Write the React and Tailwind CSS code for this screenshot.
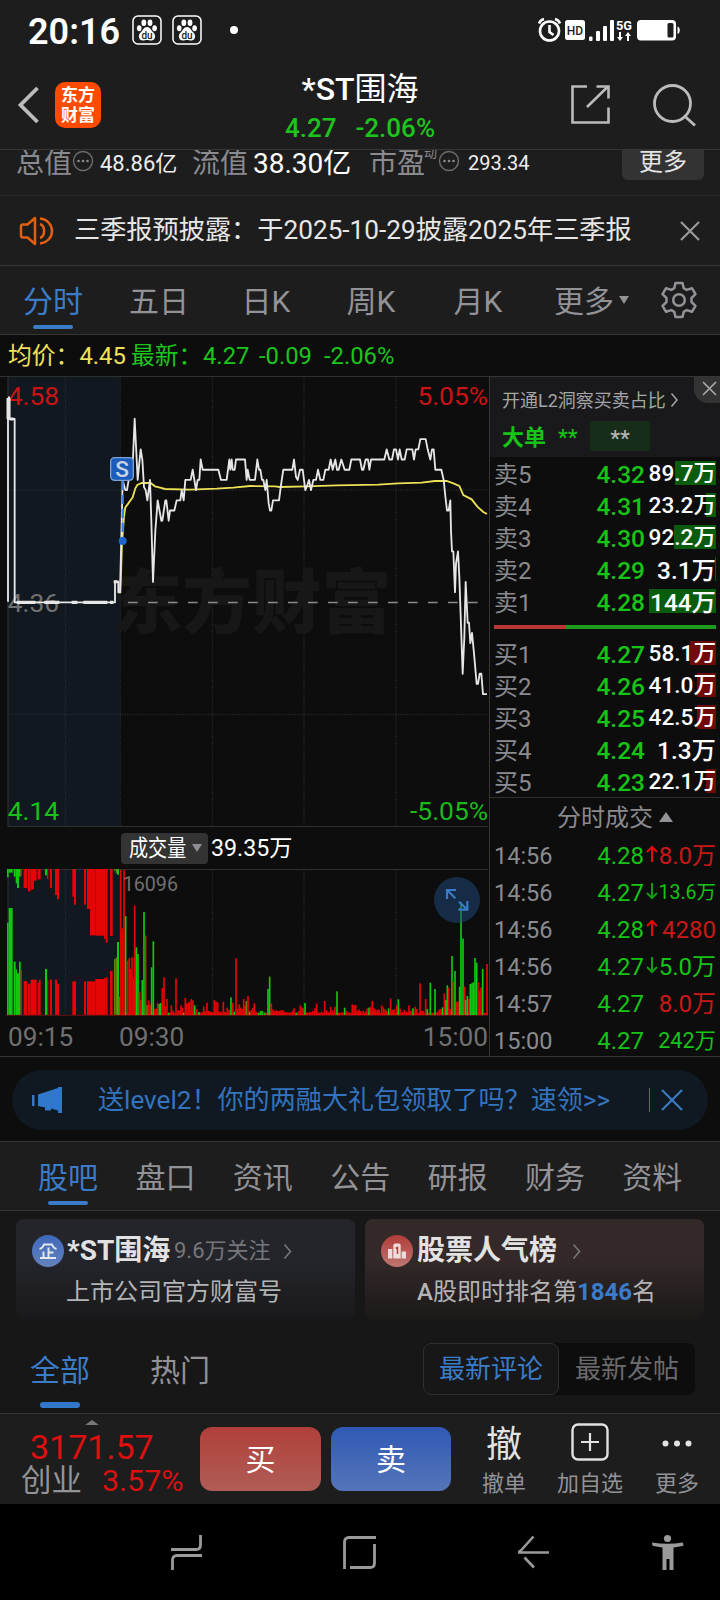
import React from 'react';
import clsx from 'clsx';

const PERIODS = [
    { label: '分时', className: 'ml-[23px] w-[60px] text-[#3b7cc9]', active: true },
    { label: '五日', className: 'ml-[46px] w-[60px]' },
    { label: '日K', className: 'ml-[52px] w-[50px]' },
    { label: '周K', className: 'ml-[55px] w-[50px]' },
    { label: '月K', className: 'ml-[57px] w-[50px]' },
    { label: '更多', className: 'ml-[51px] w-[60px]' },
];

const SELLS = [
    { label: '卖5', price: '4.32', amount: '89.7万', depth: 41 },
    { label: '卖4', price: '4.31', amount: '23.2万', depth: 10 },
    { label: '卖3', price: '4.30', amount: '92.2万', depth: 42 },
    { label: '卖2', price: '4.29', amount: '3.1万', depth: 1 },
    { label: '卖1', price: '4.28', amount: '144万', depth: 67 },
];

const BUYS = [
    { label: '买1', price: '4.27', amount: '58.1万', depth: 26 },
    { label: '买2', price: '4.26', amount: '41.0万', depth: 19 },
    { label: '买3', price: '4.25', amount: '42.5万', depth: 19 },
    { label: '买4', price: '4.24', amount: '1.3万', depth: 0 },
    { label: '买5', price: '4.23', amount: '22.1万', depth: 10 },
];

const TRADES = [
    { time: '14:56', price: '4.28', amount: '8.0万', dir: 'up', red: true, size: 'text-[24px]' },
    { time: '14:56', price: '4.27', amount: '13.6万', dir: 'down', size: 'text-[19.5px]' },
    { time: '14:56', price: '4.28', amount: '4280', dir: 'up', red: true, size: 'text-[24px]' },
    { time: '14:56', price: '4.27', amount: '5.0万', dir: 'down', size: 'text-[24px]' },
    { time: '14:57', price: '4.27', amount: '8.0万', red: true, size: 'text-[24px]' },
    { time: '15:00', price: '4.27', amount: '242万', size: 'text-[21.5px]' },
];

const SECTIONS = ['股吧', '盘口', '资讯', '公告', '研报', '财务', '资料'];

// [x, ticks above yesterday's close], chart units are a third of a pixel
const PRICE = [
    [360, 1], [363, 5], [368, 12], [376, 11], [381, 11], [386, 12], [392, 13], [399, 14.2], [404, 18], [413, 12], [422, 15], [427, 14],
    [432, 11.3], [437, 11], [442, 10], [450, 12], [454, 8], [459, 2], [466, 7], [473, 10], [484, 8], [487, 8], [496, 10], [499, 10],
    [506, 8], [510, 9], [523, 9], [530, 10], [541, 10], [545, 11], [551, 10], [556, 12], [572, 12], [578, 13], [588, 11], [593, 12],
    [598, 12], [602, 14], [608, 13], [655, 13], [663, 12], [680, 12], [688, 14], [691, 13], [695, 14], [698, 13], [704, 13], [708, 14],
    [735, 14], [740, 12], [743, 13], [749, 12], [765, 12], [772, 14], [777, 13], [781, 13], [786, 12], [790, 12], [796, 11], [800, 12],
    [806, 9.7], [810, 9], [814, 9], [819, 10], [837, 10], [843, 11.5], [850, 13], [877, 13], [882, 14], [888, 12.3], [893, 12], [900, 13],
    [908, 13], [912, 12], [916, 11], [922, 11.5], [927, 12], [933, 11], [940, 12], [948, 12], [954, 13], [961, 12], [970, 12], [976, 13],
    [986, 13], [992, 14], [998, 13], [1006, 14], [1011, 13], [1016, 13], [1024, 14], [1034, 13], [1048, 13], [1054, 14], [1080, 14],
    [1086, 13], [1090, 13], [1097, 14], [1104, 14], [1108, 13], [1113, 14], [1153, 14], [1160, 15], [1168, 14], [1176, 14], [1182, 15],
    [1188, 15], [1194, 14], [1199, 15], [1205, 14], [1214, 14], [1220, 15], [1237, 15], [1242, 14], [1247, 15], [1255, 15], [1261, 16],
    [1277, 16], [1283, 15], [1291, 14], [1296, 15], [1301, 15], [1306, 13], [1324, 13], [1331, 12], [1336, 10.4], [1341, 9], [1346, 9],
    [1351, 10], [1353, 7], [1356, 5], [1360, 5], [1365, 1], [1368, 3.8], [1374, 5], [1378, 2.5], [1388, -7], [1393, -3.4], [1397, 2],
    [1403, -2], [1407, -2], [1411, -4], [1416, -3], [1422, -5], [1430, -8], [1434, -8], [1439, -7], [1444, -7], [1449, -9], [1461, -9],
];

const pricePoints = PRICE.map(([x, n]) => `${x},${697 - n * 30.6}`).join(' ');

const AVERAGE = '361,670 366,520 372,440 376,412 385,400 398,382 406,355 412,345 425,339 452,339 465,349 480,353 495,357 570,359 650,356 700,353 750,348 825,349 840,351 920,349 1010,346 1135,344 1195,340 1265,338 1305,333 1340,333 1360,340 1378,348 1390,375 1415,388 1432,410 1450,426 1461,432';

// Call auction bars: [x, width, hanging bar end, standing bar top, color]
const AUCTION = [
    [21, 5, 172, 308, 'g'], [26, 12, 158, 264, 'g'], [41, 6, 170, 425, 'g'], [47, 4, 190, 448, 'g'], [51, 6, 204, 460, 'g'],
    [57, 5, 170, 425, 'g'], [62, 4, 168, 448, 'r'], [71, 10, 204, 483, 'r'], [84, 8, 214, 491, 'r'], [92, 10, 208, 479, 'r'],
    [102, 8, 182, 479, 'r'], [113, 4, 178, 487, 'r'], [117, 5, 178, 479, 'r'], [135, 6, 166, 447, 'g'], [141, 4, 177, 479, 'r'],
    [150, 6, 204, 479, 'r'], [165, 6, 225, 479, 'r'], [171, 6, 238, 491, 'r'], [217, 5, 230, 484, 'r'], [222, 6, 254, 484, 'r'],
    [252, 6, 254, 484, 'r'], [261, 9, 267, 484, 'r'], [270, 16, 346, 484, 'r'], [286, 26, 347, 477, 'r'], [312, 5, 356, 474, 'r'],
    [317, 6, 368, 472, 'r'], [330, 8, 348, 453, 'r'], [342, 5, 152, 417, 'o'], [347, 4, 160, 412, 'o'], [351, 6, 164, 366, 'g'],
];

// Continuous trading bars: [center x, top, color]
const VOLUME = [
    [358, 530, 'o'], [362, 150], [367, 325], [372, 150], [377, 288, 'g'], [383, 422], [388, 414], [392, 447], [396, 412], [400, 475],
    [404, 257], [409, 382, 'g'], [414, 402, 'g'], [419, 515], [422, 540], [427, 480, 'g'], [432, 276, 'g'], [437, 347, 'b'], [441, 555, 'o'],
    [446, 541], [450, 553], [455, 442, 'g'], [460, 364, 'g'], [465, 566], [469, 566], [473, 549], [478, 552, 'g'], [482, 549, 'g'],
    [487, 504], [492, 472], [497, 560], [501, 537], [506, 578, 'g'], [514, 556], [519, 572], [528, 475], [534, 570], [539, 572], [543, 556],
    [547, 563], [551, 578, 'g'], [556, 534], [560, 550], [565, 548], [569, 545], [574, 537], [579, 541], [584, 556, 'g'], [590, 567],
    [597, 576, 'g'], [605, 576], [611, 560], [616, 573], [621, 548], [626, 573], [631, 575], [636, 576], [643, 540], [648, 545], [653, 547],
    [658, 575], [663, 575], [670, 545], [675, 575], [682, 563], [687, 570], [693, 532, 'g'], [698, 548], [703, 575, 'g'], [708, 415],
    [713, 567], [718, 553], [722, 563], [727, 567], [731, 537], [735, 556], [739, 543, 'o'], [744, 528], [749, 575, 'g'], [754, 570],
    [759, 563], [763, 550], [768, 575], [776, 578, 'g'], [782, 573, 'g'], [787, 573, 'g'], [795, 578, 'g'], [804, 507, 'g'],
    [809, 470, 'g'], [814, 550], [819, 568], [824, 573], [829, 570], [834, 573], [839, 573], [844, 570], [849, 571], [854, 575],
    [860, 577], [870, 577], [877, 573], [882, 565], [889, 578, 'g'], [896, 573], [901, 556], [906, 562], [910, 565], [915, 549, 'g'],
    [920, 577], [930, 576], [938, 573], [945, 565], [950, 551], [956, 577], [965, 575], [974, 543], [980, 571], [986, 577], [992, 560],
    [998, 571], [1005, 560], [1011, 514, 'g'], [1017, 578], [1027, 577], [1034, 563, 'g'], [1040, 573], [1047, 578], [1057, 553],
    [1062, 556], [1067, 555], [1072, 572], [1077, 568], [1082, 573], [1090, 572], [1097, 575], [1101, 565], [1107, 563, 'g'],
    [1112, 560], [1117, 543], [1122, 565], [1127, 569], [1132, 570], [1137, 568], [1145, 556], [1150, 562], [1155, 568], [1160, 573],
    [1166, 565, 'g'], [1172, 535], [1177, 570], [1182, 568], [1190, 556], [1195, 538, 'g'], [1200, 565], [1207, 577], [1213, 570],
    [1220, 575], [1227, 556], [1233, 572], [1239, 565, 'g'], [1246, 560], [1250, 567], [1260, 490], [1265, 573], [1270, 573],
    [1277, 537], [1282, 567, 'g'], [1291, 488, 'g'], [1298, 578], [1305, 507, 'g'], [1313, 575], [1318, 568], [1323, 567],
    [1328, 562, 'g'], [1333, 520], [1338, 540, 'g'], [1342, 496, 'g'], [1346, 503], [1351, 568], [1356, 408, 'g'], [1360, 483],
    [1365, 453, 'g'], [1370, 545], [1374, 545], [1379, 500, 'g'], [1383, 247, 'g'], [1389, 356, 'g'], [1394, 500], [1397, 540, 'g'],
    [1402, 528, 'g'], [1407, 537], [1411, 492, 'g'], [1416, 490, 'g'], [1420, 487, 'g'], [1425, 414, 'g'], [1430, 428, 'g'],
    [1434, 487], [1439, 514], [1443, 502], [1448, 447, 'g'], [1461, 432],
];

const FILL = { g: '#0fc80f', r: '#e60505', o: '#5f8208', b: '#a03a08' };

const BaiduIcon = () => (
    <svg width="30" height="30" viewBox="0 0 30 30">
        <rect x="1" y="1" width="28" height="28" rx="5" fill="none" stroke="#fff" strokeWidth="1.5" />
        <g fill="#fff">
            <ellipse cx="11.8" cy="7.8" rx="2.4" ry="3.3" />
            <ellipse cx="18" cy="7.8" rx="2.4" ry="3.3" />
            <ellipse cx="7.2" cy="13.3" rx="2.3" ry="3" />
            <ellipse cx="22.6" cy="13.3" rx="2.3" ry="3" />
            <path d="M15 12c3.200 0 3.800 3.200 6.200 5.200 3.400 2.900 2 8.300-2 8.300-1.600 0-2.600-.5-4.200-.5s-2.600.5-4.200.5c-4 0-5.400-5.400-2-8.300C11.200 15.200 11.800 12 15 12z" />
        </g>
        <text x="15" y="23.800" textAnchor="middle" fontSize="10" fontWeight="500" fill="#1d1d1d">du</text>
    </svg>
);

const StatusBar = () => (
    <div className="h-[60px] flex items-center">
        <span className="ml-[28px] mt-[3px] w-[92px] text-[36px] font-semibold text-white leading-[62px]">20:16</span>
        <div className="ml-[12px] w-[30px]"><BaiduIcon /></div>
        <div className="ml-[10px] w-[30px]"><BaiduIcon /></div>
        <div className="ml-[28px] size-2 rounded-full bg-white" />
        <svg className="ml-[299px]" width="146" height="26" viewBox="537 17 146 26">
            <g fill="none" stroke="#fff" strokeWidth="2.600">
                <circle cx="549.500" cy="31" r="9.500" />
                <path d="M549.500 25v7l4 3M539 23.500c1-2.500 2.500-4 5-4.500M560 23.500c-1-2.500-2.500-4-5-4.500" />
            </g>
            <rect x="565" y="20" width="20" height="20" rx="2.500" fill="#fff" />
            <text x="575" y="34.500" textAnchor="middle" fontSize="12" fontWeight="500" fill="#1d1d1d">HD</text>
            <g fill="#fff">
                <rect x="589" y="36.500" width="3.500" height="4.500" rx="1" />
                <rect x="596" y="31" width="4" height="10" rx="1" />
                <rect x="603" y="26" width="4" height="15" rx="1" />
                <rect x="610" y="20" width="4" height="21" rx="1" />
                <text x="616" y="29.500" fontSize="13" fontWeight="700" textLength="16" lengthAdjust="spacingAndGlyphs">5G</text>
                <path d="M621 32v5h2l-3 4-3-4h2v-5zM627 41v-5h-2l3-4 3 4h-2v5z" />
                <rect x="637" y="20" width="39" height="20.500" rx="4" />
                <path d="M677.500 26.500c3 .5 3 7 0 7.500z" />
            </g>
            <rect x="667.500" y="23" width="6" height="14.500" rx="1.500" fill="#1d1d1d" />
        </svg>
    </div>
);

const Header = () => (
    <div className="h-[90px] flex items-start border-b border-[#363636]">
        <svg className="ml-[17px] mt-[25px]" width="24" height="40" viewBox="0 0 24 40">
            <path d="M20.500 3L3.500 20 20.500 37" fill="none" stroke="#bbb" strokeWidth="3.800" />
        </svg>
        <div className="ml-[14px] mt-[22px] w-[46px] h-[46px] rounded-[10px] bg-[#ff4b00] pt-[3px] text-center font-bold text-[17px] leading-[20px] text-white">
            东方<br />财富
        </div>
        <div className="ml-[160px] w-[198px] mt-[12px] flex flex-col items-center">
            <div className="text-[32px] leading-[34px] text-white whitespace-nowrap"><span className="font-medium">*ST</span>围海</div>
            <div className="mt-[5px] flex gap-[19px] text-[26px] leading-[34px] font-medium text-[#1cc51c] whitespace-nowrap">
                <span>4.27</span><span>-2.06%</span>
            </div>
        </div>
        <svg className="ml-[110px] mt-[23px]" width="44" height="42" viewBox="0 0 44 42">
            <g fill="none" stroke="#bbb" strokeWidth="2.600">
                <path d="M18 3.500H3.500v36h36V24.500" />
                <path d="M18 24L39 3.500M27.500 3.500H39.500V15.500" />
            </g>
        </svg>
        <svg className="ml-[39px] mt-[22px]" width="46" height="46" viewBox="0 0 46 46">
            <g fill="none" stroke="#bbb" strokeWidth="2.800">
                <circle cx="20.500" cy="21.500" r="18" />
                <path d="M32 33.500L43 43.500" />
            </g>
        </svg>
    </div>
);

const InfoDot = () => (
    <svg width="22" height="22" viewBox="0 0 22 22" className="shrink-0">
        <circle cx="11" cy="11" r="9.500" fill="none" stroke="#6a6a6a" strokeWidth="1.500" />
        <g fill="#8a8a8a"><circle cx="6.500" cy="11" r="1.300" /><circle cx="11" cy="11" r="1.300" /><circle cx="15.500" cy="11" r="1.300" /></g>
    </svg>
);

const Stats = () => (
    <div className="h-[46px] flex items-start overflow-hidden border-b border-[#2c2c2c] leading-[27px] text-[28px] text-[#8a8a8f] whitespace-nowrap">
        <span className="ml-[16px] w-[56px]">总值</span>
        <InfoDot />
        <span className="ml-[6px] w-[92px] text-[22px] text-[#eee]">48.86亿</span>
        <span className="w-[61px]">流值</span>
        <span className="w-[116px] text-white">38.30亿</span>
        <span className="w-[55px]">市盈</span>
        <span className="w-[14px] -mt-[11px] text-[13px]">动</span>
        <InfoDot />
        <span className="ml-[8px] w-[154px] text-[20px] text-[#eee]">293.34</span>
        <span className="w-[82px] h-[31px] -mt-px rounded-b-md bg-[#333] text-center text-[24px] text-[#e4e4e4]">更多</span>
    </div>
);

const Notice = () => (
    <div className="h-[70px] flex items-center border-b border-[#363636]">
        <svg className="ml-[18px]" width="38" height="32" viewBox="0 0 38 32">
            <g fill="none" stroke="#e2600f" strokeWidth="2.500" strokeLinejoin="round">
                <path d="M17 3v26L9.500 22.500H5q-2 0-2-2v-9q0-2 2-2h4.500z" />
                <path d="M22 9c5.500 2 5.500 12 0 14M22 3.500c16 2 16 23 0 25" />
            </g>
        </svg>
        <span className="ml-[18px] w-[606px] text-[26.2px] leading-[69px] text-[#e6e6e6] whitespace-nowrap">三季报预披露：于2025-10-29披露2025年三季报</span>
        <svg width="20" height="20" viewBox="0 0 20 20">
            <path d="M1 1l18 18M19 1L1 19" stroke="#999" strokeWidth="2.200" />
        </svg>
    </div>
);

const PeriodTabs = () => (
    <div className="h-[69px] flex items-start border-b border-[#363636] text-[30px] text-[#929297]">
        {PERIODS.map((p) => (
            <div key={p.label} className={clsx('flex flex-col items-center', p.className)}>
                <span className="mt-[11px] h-[48px] leading-[50px] whitespace-nowrap">{p.label}</span>
                {p.active && <span className="w-[40px] h-[4px] rounded-full bg-[#3b7cc9]" />}
            </div>
        ))}
        <svg className="ml-[5px] mt-[30px]" width="10" height="9" viewBox="0 0 11 10"><path d="M0 0h11L5.500 9z" fill="#929297" /></svg>
        <svg className="ml-[31px] mt-[15px]" width="38" height="38" viewBox="0 0 38 38">
            <g fill="none" stroke="#929297" strokeWidth="2.500" strokeLinejoin="round">
                <path d="M15.500 2h7l1.200 5.200 3 1.700 5.200-1.700 3.600 6-4 3.800v4l4 3.800-3.600 6-5.200-1.700-3 1.700L22.500 36h-7l-1.200-5.200-3-1.700-5.200 1.700-3.600-6 4-3.800v-4l-4-3.800 3.600-6 5.200 1.700 3-1.700z" />
                <circle cx="19" cy="19" r="5.800" />
            </g>
        </svg>
    </div>
);

const PriceLine = () => (
    <div className="h-[41px] flex items-center bg-[#0d0d0d] text-[23.8px] leading-[42px] text-[#1cc51c] whitespace-nowrap">
        <span className="ml-[8px] w-[123px] text-[#f0e15a]">均价：4.45</span>
        <span className="w-[72px]">最新：</span>
        <span className="w-[56px]">4.27</span>
        <span className="w-[65px]">-0.09</span>
        <span>-2.06%</span>
    </div>
);

const PriceChart = () => (
    <svg width="489" height="451" viewBox="0 18 1467 1353" className="block">
        <rect x="24" y="18" width="337" height="1353" fill="#111820" />
        <g stroke="#303235" strokeWidth="3" strokeDasharray="3 4">
            <path d="M196 20V1370M361 20V1370M637 20V1370M912 20V1370M1188 20V1370M24 360H1464M24 1033H1464" />
        </g>
        <path d="M0 19.500H1467M24 20V1370M24 1369.500H1464" stroke="#303030" strokeWidth="3.500" fill="none" />
        <text x="338" y="774" fontSize="210" fontWeight="900" fill="#171717" textLength="836" lengthAdjust="spacingAndGlyphs">东方财富</text>
        <path d="M384 697.500H1434" stroke="#8c8c8c" strokeWidth="5" strokeDasharray="29 31" />
        <g fontSize="79">
            <text x="23" y="105" fill="#c81414">4.58</text>
            <text x="23" y="726" fill="#707070">4.36</text>
            <text x="23" y="1350" fill="#16c316">4.14</text>
            <text x="1464" y="105" fill="#c81414" textAnchor="end">5.05%</text>
            <text x="1464" y="1350" fill="#1cb91c" textAnchor="end">-5.05%</text>
        </g>
        <polyline points={AVERAGE} fill="none" stroke="#ece056" strokeWidth="5.500" />
        <g fill="none" stroke="#e6e6e6" strokeWidth="5.500" strokeLinejoin="round">
            <path d="M24 695V86H29V147H44V697H345V635H355V667H361" />
            <polyline points={pricePoints} />
        </g>
        <path d="M50 697H106M133 697H178M215 697H232M250 697H322M330 697H340" stroke="#e6e6e6" strokeWidth="10" />
        <path d="M24 84V147M24 84h6M29 147h12M341 635h12" stroke="#e6e6e6" strokeWidth="9" />
        <path d="M368 332V505" stroke="#3b82e0" strokeWidth="7" strokeDasharray="28 14" />
        <circle cx="368" cy="513" r="12" fill="#1f66c8" />
        <rect x="332" y="263" width="68" height="68" rx="12" fill="#1a5bbb" stroke="#7ea4d6" strokeWidth="4" />
        <text x="366" y="321" textAnchor="middle" fontSize="68" fontWeight="500" fill="#c9d3e2">S</text>
    </svg>
);

const VolumeChart = () => (
    <svg width="489" height="147" viewBox="0 147 1467 441" className="block">
        <rect x="24" y="147" width="337" height="438" fill="#111820" />
        <path d="M196 150V585M361 150V585M637 150V585M912 150V585M1188 150V585" stroke="#303235" strokeWidth="3" strokeDasharray="3 4" />
        <path d="M24 148.500H1464M24 148V585" stroke="#303030" strokeWidth="3" />
        {AUCTION.map(([x, w, end, top, c]) => (
            <g key={x} fill={FILL[c]}>
                <rect x={x} y="147" width={w} height={end - 147} />
                <rect x={x} y={top} width={w} height={585 - top} />
            </g>
        ))}
        <path d="M361 582H1464" stroke="#c80808" strokeWidth="7" />
        <path d="M24 586H1464" stroke="#641010" strokeWidth="3" />
        {VOLUME.map(([x, top, c = 'r']) => (
            <rect key={x} x={x - 2.5} y={top} width="5" height={585 - top} fill={FILL[c]} />
        ))}
        <text x="368" y="213" fontSize="60" fill="#707070" textLength="166" lengthAdjust="spacingAndGlyphs">16096</text>
        <circle cx="1371" cy="240" r="69" fill="#204a80" fillOpacity=".5" />
        <path d="M1341 237V210H1368M1342 211L1366 235M1375 269H1402V243M1401 268L1377 245" fill="none" stroke="#3b7cc9" strokeWidth="6.500" />
    </svg>
);

const DepthRow = ({ row, side }) => (
    <div className="h-8 shrink-0 flex items-center pl-[4px] pr-[4px] text-[24px]">
        <span className="w-[60px] leading-8 text-[#8a8a8f]">{row.label}</span>
        <span className="flex-1 text-right text-[24.5px] leading-8 font-medium text-[#16c316]">{row.price}</span>
        <span className="relative ml-[3px] -mt-[4px] w-[68px] h-[24px] flex justify-end">
            <span
                className={clsx('absolute right-0 top-0 h-full', side === 'sell' ? 'bg-[#0a5c0c]' : 'bg-[#700909]')}
                style={{ width: row.depth }}
            />
            <span
                className={clsx(
                    'relative font-medium text-white whitespace-nowrap',
                    row.amount.length > 4 ? 'text-[22.6px] leading-[25px]' : 'text-[24.4px] leading-[28px]'
                )}
            >
                {row.amount}
            </span>
        </span>
    </div>
);

const Arrow = ({ dir }) => (
    <svg width="12" height="18" viewBox="0 0 12 18">
        {dir === 'up' && <path d="M6 17V2M1 7l5-5 5 5" fill="none" stroke="#e60a0a" strokeWidth="2" />}
        {dir === 'down' && <path d="M6 1v15M1 11l5 5 5-5" fill="none" stroke="#129c12" strokeWidth="2" />}
    </svg>
);

const OrderBook = () => (
    <div className="w-[231px] border-l border-t border-[#363636] flex flex-col">
        <div className="h-[80px] shrink-0 bg-[#19191b] flex flex-col">
            <div className="h-[40px] flex items-start">
                <span className="ml-[12px] mt-[8px] w-[166px] text-[18px] leading-[31px] text-[#a5a5a8] whitespace-nowrap">开通L2洞察买卖占比</span>
                <svg className="ml-[2px] mt-[15px]" width="10" height="16" viewBox="0 0 10 16"><path d="M1.500 1.500L7 8l-5.500 6.500" fill="none" stroke="#a5a5a8" strokeWidth="1.500" /></svg>
                <div className="ml-auto size-[26px] rounded-bl-[14px] bg-[#333] pl-[8px] pt-[4px]">
                    <svg width="15" height="15" viewBox="0 0 15 15"><path d="M1 1l13 13M14 1L1 14" stroke="#aaa" strokeWidth="1.600" /></svg>
                </div>
            </div>
            <div className="h-[40px] flex items-center text-[22px]">
                <span className="ml-[12px] w-[56px] font-bold leading-[40px] pt-[2px] text-[#16c316]">大单</span>
                <span className="w-[32px] font-medium leading-[40px] pt-[2px] text-[#16c316]">**</span>
                <span className="-mt-[2px] w-[60px] h-[30px] bg-[#172c19] text-center font-medium leading-[35px] text-[#b4b4b4]">**</span>
            </div>
        </div>
        <div className="mt-[2px] shrink-0">
            {SELLS.map((r) => <DepthRow key={r.label} row={r} side="sell" />)}
        </div>
        <div className="ml-[4px] mr-[4px] mt-[6px] h-[4px] shrink-0 flex">
            <div className="w-[72px] bg-[#b83636]" />
            <div className="flex-1 bg-[#1e9a1e]" />
        </div>
        <div className="mt-[10px] h-[158px] shrink-0">
            {BUYS.map((r) => <DepthRow key={r.label} row={r} side="buy" />)}
        </div>
        <div className="h-[40px] shrink-0 border-t border-[#303030] flex items-center text-[24px] leading-[38px] text-[#8a8a8f]">
            <span className="ml-[67px] w-[96px]">分时成交</span>
            <svg className="ml-[6px] -mt-[2px]" width="14" height="10" viewBox="0 0 14 10"><path d="M7 0l7 10H0z" fill="#929297" /></svg>
        </div>
        <div className="h-[219px] shrink-0">
            {TRADES.map((t, i) => (
                <div key={i} className="h-[37px] flex items-center pl-[4px] pr-[4px] text-[24px] leading-[38px]">
                    <span className="w-[70px] text-[23.5px] text-[#8a8a8f]">{t.time}</span>
                    <span className="flex-1 text-right text-[#16c316]">{t.price}</span>
                    <span className="ml-[2px] -mt-[3px] w-[12px]"><Arrow dir={t.dir} /></span>
                    <span className={clsx('w-[58px] text-right whitespace-nowrap', t.size, t.red ? 'text-[#c81818]' : 'text-[#16c316]')}>{t.amount}</span>
                </div>
            ))}
        </div>
    </div>
);

const Market = () => (
    <div className="h-[681px] flex bg-[#0d0d0d] border-b border-[#363636]">
        <div className="w-[489px]">
            <PriceChart />
            <div className="h-[42px] flex items-center">
                <div className="ml-[121px] w-[87px] h-[31px] rounded-[4px] bg-[#333] flex items-center">
                    <span className="ml-[8px] w-[58px] text-[23px] leading-[31px] text-white whitespace-nowrap">
                        <span className="inline-block origin-left scale-x-[.83]">成交量</span>
                    </span>
                    <svg className="ml-[5px]" width="10" height="8" viewBox="0 0 10 8"><path d="M0 0h10L5 8z" fill="#8e8e94" /></svg>
                </div>
                <span className="ml-[3px] text-[23.2px] leading-[43px] text-white">39.35万</span>
            </div>
            <VolumeChart />
            <div className="h-[40px] flex text-[26.200px] leading-[42px] text-[#707070]">
                <span className="ml-[8px] w-[111px]">09:15</span>
                <span className="flex-1">09:30</span>
                <span className="mr-[1px]">15:00</span>
            </div>
        </div>
        <OrderBook />
    </div>
);

const Promo = () => (
    <div className="h-[84px] bg-[#0d0d0d] px-[12px] pt-[13px]">
        <div className="h-[60px] rounded-full bg-[#101921] flex items-center text-[#3473bd]">
            <svg className="ml-[20px]" width="31" height="28" viewBox="0 0 31 28">
                <path d="M0 9h2.500v11H0zM6 8.500L26 2V1h4v26h-4v-2.500l-7-2v2h-6v-3l-7-1.500z" fill="#3178ca" />
            </svg>
            <span className="ml-[35px] w-[551px] text-[26.1px] leading-[59px] whitespace-nowrap">送level2！你的两融大礼包领取了吗？速领&gt;&gt;</span>
            <span className="w-px h-6 bg-[#3473bd]" />
            <svg className="ml-[11px]" width="22" height="22" viewBox="0 0 22 22"><path d="M1 1l20 20M21 1L1 21" stroke="#3b7cc9" strokeWidth="2" /></svg>
        </div>
    </div>
);

const SectionTabs = () => (
    <div className="h-[70px] border-y border-[#363636] pl-[38px] flex items-start gap-[37.4px] text-[30px] text-[#929297]">
        {SECTIONS.map((s, i) => (
            <div key={s} className={clsx('w-[60px] flex flex-col items-center', i === 0 && 'text-[#3b7cc9]')}>
                <span className="mt-[11px] h-[48px] leading-[50px]">{s}</span>
                {i === 0 && <span className="w-[40px] h-[4px] rounded-full bg-[#3b7cc9]" />}
            </div>
        ))}
    </div>
);

const Chevron = ({ className }) => (
    <svg className={className} width="10" height="17" viewBox="0 0 10 17"><path d="M1.500 1.500l6 7-6 7" fill="none" stroke="#77777a" strokeWidth="1.600" /></svg>
);

const Community = () => (
    <div className="h-[202px] bg-[#171717] pt-[8px]">
        <div className="flex gap-[10px] pl-[16px] pr-[16px] whitespace-nowrap">
            <div className="w-[339px] h-[100px] rounded-lg bg-gradient-to-b from-[#24252b] from-40% to-[#1a1a1c] pt-[12px]">
                <div className="h-[40px] flex items-center">
                    <svg className="ml-[16px]" width="32" height="32" viewBox="0 0 32 32">
                        <defs><linearGradient id="blue" x2="0" y2="1"><stop stopColor="#3d68ba" /><stop offset="1" stopColor="#6482bd" /></linearGradient></defs>
                        <circle cx="16" cy="16" r="16" fill="url(#blue)" />
                        <path d="M7.500 14q3-.5 4.500-4.500h8q1.500 4 4.500 4.500M16.500 12.500V23M16.500 17.500h5M11.500 16.500V23M8 23h16" fill="none" stroke="#e4e8f0" strokeWidth="1.900" />
                    </svg>
                    <span className="ml-[3px] w-[107px] text-[28px] font-bold leading-[42px] text-[#e2e2e2]">*ST围海</span>
                    <span className="w-[109px] text-[22px] leading-[42px] text-[#77777a]">9.6万关注</span>
                    <Chevron />
                </div>
                <div className="pl-[50px] text-[24px] leading-[42px] text-[#b4b4b6]">上市公司官方财富号</div>
            </div>
            <div className="w-[339px] h-[100px] rounded-lg bg-gradient-to-b from-[#332928] from-40% to-[#1c1919] pt-[12px]">
                <div className="h-[40px] flex items-center">
                    <svg className="ml-[16px]" width="32" height="32" viewBox="0 0 32 32">
                        <defs><linearGradient id="red" x2="0" y2="1"><stop stopColor="#b13c38" /><stop offset="1" stopColor="#bd7672" /></linearGradient></defs>
                        <circle cx="16" cy="16" r="16" fill="url(#red)" />
                        <path d="M7 14h4.300v9.500H7zM12.300 10.500q0-2 2-2h3.400q2 0 2 2v13h-7.400zM20.700 16.500H25v7h-4.300z" fill="#ecdcdb" />
                        <path d="M14.800 13.500l1.700-1v6.500" stroke="#b13c38" strokeWidth="1.500" fill="none" />
                    </svg>
                    <span className="ml-[4px] w-[155px] text-[28px] font-bold leading-[42px] text-[#e2e2e2]">股票人气榜</span>
                    <Chevron />
                </div>
                <div className="pl-[52px] text-[24px] leading-[42px] text-[#b4b4b6]"><span className="font-medium">A</span>股即时排名第<span className="font-bold text-[#3b7cc9]">1846</span>名</div>
            </div>
        </div>
        <div className="mt-[24px] flex items-start text-[30px] text-[#929297]">
            <div className="ml-[30px] w-[60px] flex flex-col items-center text-[#3b7cc9]">
                <span className="leading-[56px]">全部</span>
                <span className="mt-[3px] w-[40px] h-[6px] rounded-full bg-[#3178ca]" />
            </div>
            <span className="ml-[60px] w-[60px] leading-[56px]">热门</span>
            <div className="ml-[213px] w-[272px] h-[52px] rounded-lg bg-[#0d0d0d] flex text-center text-[26px] leading-[50px] text-[#6a6a6c]">
                <span className="w-[136px] rounded-lg border border-[#303030] bg-[#171717] text-[#3b7cc9]">最新评论</span>
                <span className="w-[136px] border-y border-transparent">最新发帖</span>
            </div>
        </div>
    </div>
);

const ActionBar = () => (
    <div className="h-[91px] border-t border-[#363636] flex items-start whitespace-nowrap">
        <div className="w-[200px]">
            <svg className="ml-[85px] mt-[6px] block" width="14" height="5" viewBox="0 0 14 5"><path d="M7 0l7 5H0z" fill="#77777a" /></svg>
            <div className="mt-[5px] pl-[30px] text-[34px] leading-[34px] text-[#dc1010]">3171.57</div>
            <div className="pl-[21px] flex text-[30.4px] leading-[33px]">
                <span className="w-[81px] text-[#929297]">创业</span>
                <span className="text-[#dc1010]">3.57%</span>
            </div>
        </div>
        <div className="mt-[13px] w-[121px] h-[64px] rounded-xl bg-gradient-to-b from-[#b03f3a] to-[#b05c57] text-center text-[30px] leading-[65px] text-white">买</div>
        <div className="ml-[10px] mt-[13px] w-[120px] h-[64px] rounded-xl bg-gradient-to-b from-[#3059b4] to-[#5575b9] text-center text-[30px] leading-[65px] text-white">卖</div>
        <div className="ml-[22px] w-[62px] flex flex-col items-center text-[22px] text-[#929297]">
            <span className="mt-[10px] h-[46px] text-[36px] leading-[42px] text-[#e2e2e2]">撤</span>
            <span className="leading-[28px]">撤单</span>
        </div>
        <div className="ml-[19px] w-[72px] flex flex-col items-center text-[22px] text-[#929297]">
            <svg className="mt-[9px]" width="38" height="38" viewBox="0 0 38 38">
                <rect x="1.500" y="1.500" width="35" height="35" rx="5.500" fill="none" stroke="#e2e2e2" strokeWidth="2.400" />
                <path d="M19 10v18M10 19h18" stroke="#e2e2e2" strokeWidth="2.200" />
            </svg>
            <span className="mt-[9px] leading-[28px]">加自选</span>
        </div>
        <div className="ml-[21px] w-[60px] flex flex-col items-center text-[22px] text-[#929297]">
            <svg className="mt-[26px]" width="32" height="7" viewBox="0 0 32 7"><g fill="#e2e2e2"><circle cx="4.500" cy="3.500" r="3" /><circle cx="16" cy="3.500" r="3" /><circle cx="27.500" cy="3.500" r="3" /></g></svg>
            <span className="mt-[23px] leading-[28px]">更多</span>
        </div>
    </div>
);

const SystemNav = () => (
    <div className="h-[96px] bg-black flex items-start pt-[30px]">
        <svg className="ml-[170px]" width="34" height="37" viewBox="0 0 34 37">
            <path d="M30.500 1v10q0 4.500-4.500 4.500H1M32 21.500H7q-4.500 0-4.500 4.500v10" fill="none" stroke="#9a9a9a" strokeWidth="2.800" />
        </svg>
        <svg className="ml-[138px]" width="36" height="37" viewBox="0 0 36 37">
            <path d="M34 3.500H7q-4.500 0-4.500 4.500v27M32.500 10v19q0 4.500-4.500 4.500H8" fill="none" stroke="#9a9a9a" strokeWidth="2.800" />
        </svg>
        <svg className="ml-[138px]" width="34" height="37" viewBox="0 0 34 37">
            <path d="M17.500 2.500L4 17.500M2 18.500H33M8.500 23.500L18 33.500" fill="none" stroke="#9a9a9a" strokeWidth="2.600" />
            <path d="M4.500 17L3 18.500" stroke="#9a9a9a" strokeWidth="3.500" />
        </svg>
        <svg className="ml-[101px]" width="34" height="37" viewBox="0 0 34 37">
            <circle cx="16.500" cy="4.500" r="3.600" fill="#9a9a9a" />
            <path d="M1 8.500q15.500 2.500 31 0l.5 3.300q-5 1.200-10 1.600V36h-4V25h-3v11h-4V13.400q-5-.4-10-1.600z" fill="#9a9a9a" />
        </svg>
    </div>
);

const App = () => (
    <div className="w-[720px] h-[1600px] overflow-hidden bg-[#1d1d1d] font-['Roboto','Noto_Sans_CJK_SC',sans-serif]">
        <StatusBar />
        <Header />
        <Stats />
        <Notice />
        <PeriodTabs />
        <PriceLine />
        <Market />
        <Promo />
        <SectionTabs />
        <Community />
        <ActionBar />
        <SystemNav />
    </div>
);

export default App;
